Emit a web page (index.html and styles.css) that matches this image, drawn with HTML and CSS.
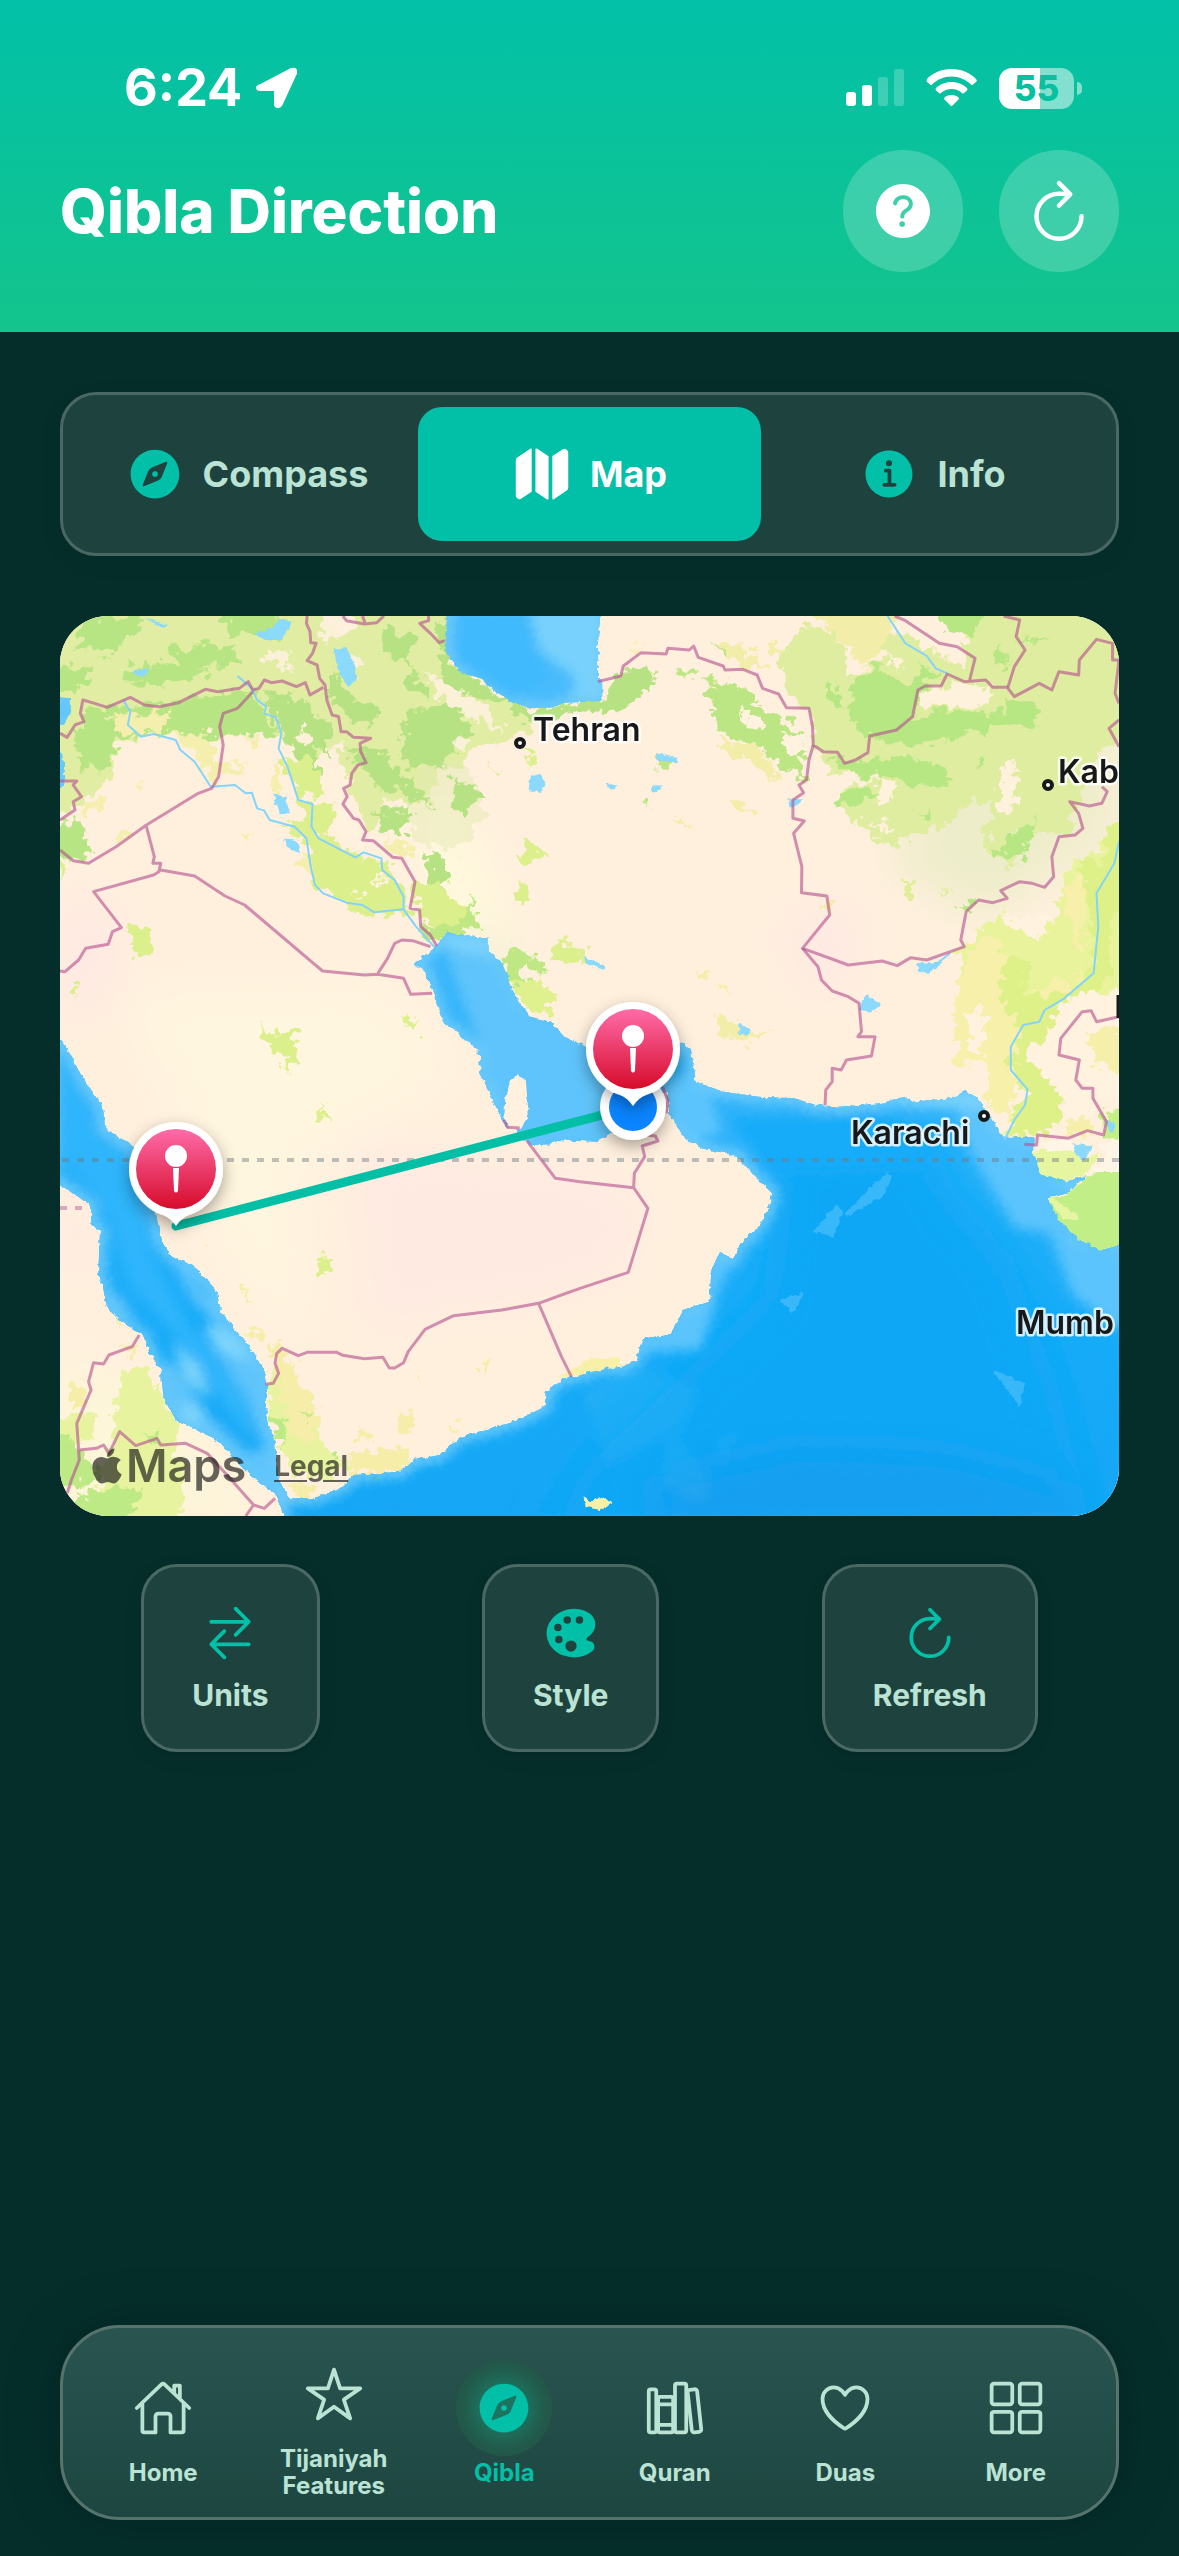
FILE: index.html
```html
<!DOCTYPE html>
<html lang="en">
<head>
<meta charset="utf-8">
<meta name="viewport" content="width=device-width, initial-scale=1">
<title>Qibla Direction</title>
<link rel="stylesheet" href="styles.css">
</head>
<body>
<div class="app">
  <header class="header">
    <div class="status">
      <div class="status-group">
        <span class="time">6:24</span>
        <svg class="location" viewBox="0 0 42 42" aria-hidden="true"><path d="M4.500 17 34 1.500Q42-1.500 41 6.500L26.500 38Q24.500 42 21 41 18 40.500 18 37V24H5Q0 24 0 20.500 0 18.500 4.500 17Z"/></svg>
      </div>
      <div class="status-group status-right">
        <svg class="signal" viewBox="0 0 58 38" aria-hidden="true"><rect y="23" width="10" height="14" rx="3"/><rect x="16" y="16" width="10" height="21" rx="3"/><g opacity=".22"><rect x="32" y="8" width="10" height="29" rx="3"/><rect x="48" width="10" height="37" rx="3"/></g></svg>
        <svg class="wifi" viewBox="0 0 51 38" aria-hidden="true"><path d="M25.500 0C35.500 0 44.500 4 50 10 51 11 51 12 50 13L47 15.500Q46 16.500 45 15.500C40 10.500 33 7.500 25.500 7.500S11 10.500 6 15.500Q5 16.500 4 15.500L1 13Q0 12 1 10C6.500 4 15.500 0 25.500 0Z"/><path d="M25.500 13C32 13 37 15.500 41 19Q42 20 41 21.500L38 24Q37 25 36 24C33 21.500 29.500 20 25.500 20S18 21.500 15 24Q14 25 13 24L10 21.500Q9 20 10 19C14 15.500 19 13 25.500 13Z"/><path d="M25.500 26C29 26 31 27 32.500 28.500 33 29 33 30 32.500 30.500L26.500 36.500Q25.500 37.500 24.500 36.500L18.500 30.500Q17.500 29.500 18.500 28.500C20 27 22 26 25.500 26Z"/></svg>
        <div class="battery"><span>55</span></div>
      </div>
    </div>
    <div class="title-row">
      <h1>Qibla Direction</h1>
      <div class="header-actions">
        <button type="button" class="round" aria-label="Help"><svg class="icon-lg" viewBox="0 0 512 512"><path d="M256 64C150 64 64 150 64 256s86 192 192 192 192-86 192-192S362 64 256 64zm-6 304a20 20 0 1120-20 20 20 0 01-20 20zm33.440-102C267.230 276.880 265 286.850 265 296a14 14 0 01-28 0c0-21.910 10.080-39.330 30.820-53.260C287.100 229.800 298 221.600 298 203.570c0-12.260-7-21.570-21.490-28.460-3.410-1.620-11-3.200-20.340-3.090-11.720.15-20.820 2.950-27.830 8.590C215.120 191.250 214 202.830 214 203a14 14 0 11-28-1.350c.11-2.430 1.800-24.320 24.770-42.800 11.910-9.580 27.060-14.560 45-14.780 12.700-.15 24.630 2 32.720 5.820C312.700 161.340 326 180.430 326 203.570c0 33.830-22.610 49.020-42.560 62.430z"/></svg></button>
        <button type="button" class="round" aria-label="Reload"><svg class="icon-lg line" viewBox="0 0 512 512"><path d="M320 146s24.360-12-64-12a160 160 0 10160 160M256 58l80 80-80 80"/></svg></button>
      </div>
    </div>
  </header>

  <main class="content">
    <div class="tabs" role="tablist">
      <button type="button" role="tab" class="tab" aria-selected="false"><svg class="icon" viewBox="0 0 512 512"><circle cx="256" cy="256" r="24"/><path d="M256 48C141.130 48 48 141.130 48 256s93.130 208 208 208 208-93.130 208-208S370.870 48 256 48zm105.070 113.330l-46.880 117.200a64 64 0 01-35.660 35.660l-117.200 46.880a8 8 0 01-10.400-10.400l46.880-117.200a64 64 0 0135.660-35.660l117.200-46.880a8 8 0 0110.400 10.400z"/></svg>Compass</button>
      <button type="button" role="tab" class="tab active" aria-selected="true"><svg class="icon" viewBox="0 0 512 512"><path d="M48.170 113.340A32 32 0 0032 141.240V438a32 32 0 0047 28.370c.43-.23.85-.47 1.260-.74l84.140-55.050a8 8 0 003.630-6.720V46.450a8 8 0 00-12.510-6.630zM212.360 39.310A8 8 0 00200 46v357.560a8 8 0 003.630 6.720l96 62.420A8 8 0 00312 466V108.670a8 8 0 00-3.640-6.730zM464.530 46.470a31.640 31.640 0 00-31.500-.88 12.070 12.070 0 00-1.250.74l-84.150 55a8 8 0 00-3.630 6.720v357.460a8 8 0 0012.520 6.630l107.070-73.460a32 32 0 0016.410-28v-296a32.760 32.760 0 00-15.470-28.210z"/></svg>Map</button>
      <button type="button" role="tab" class="tab" aria-selected="false"><svg class="icon" viewBox="0 0 512 512"><path d="M256 56C145.720 56 56 145.720 56 256s89.720 200 200 200 200-89.720 200-200S366.280 56 256 56zm0 82a26 26 0 11-26 26 26 26 0 0126-26zm48 226h-88a16 16 0 010-32h28v-88h-16a16 16 0 010-32h32a16 16 0 0116 16v104h28a16 16 0 010 32z"/></svg>Info</button>
    </div>

    <section class="map" aria-label="Map">
      <svg class="layer" viewBox="28 48 2965 2700" preserveAspectRatio="none" aria-hidden="true">
        <defs>
          <filter id="rough" x="-5%" y="-5%" width="110%" height="110%"><feTurbulence type="fractalNoise" baseFrequency=".03" numOctaves="3" seed="4"/><feDisplacementMap in="SourceGraphic" scale="70" xChannelSelector="R" yChannelSelector="G"/></filter>
          <filter id="coast" x="-2%" y="-2%" width="104%" height="104%"><feTurbulence type="fractalNoise" baseFrequency=".06" numOctaves="2" seed="8"/><feDisplacementMap in="SourceGraphic" scale="16" xChannelSelector="R" yChannelSelector="G"/></filter>
          <filter id="soft" x="-30%" y="-30%" width="160%" height="160%"><feGaussianBlur stdDeviation="16"/></filter>
          <filter id="softer" x="-30%" y="-30%" width="160%" height="160%"><feGaussianBlur stdDeviation="60"/></filter>
          <clipPath id="sea-clip"><path id="sea" d="M1075 1045 1020 1090 1050 1115 1070 1170 1085 1220 1100 1265 1145 1300 1160 1320 1200 1350 1205 1420 1240 1500 1265 1560 1282 1585 1315 1575 1310 1600 1345 1635 1400 1633 1420 1620 1530 1625 1568 1600 1600 1590 1650 1600 1680 1550 1690 1500 1725 1470 1730 1480 1734 1540 1774 1610 1824 1645 1924 1668 1974 1730 2022 1780 2014 1820 1984 1880 1929 1935 1914 1978 1874 1958 1852 2010 1846 2105 1774 2130 1734 2205 1664 2215 1639 2280 1604 2300 1534 2305 1484 2325 1440 2335 1388 2375 1385 2420 1310 2460 1240 2485 1150 2510 1090 2565 1020 2580 980 2615 850 2625 820 2660 740 2695 670 2695 640 2640 630 2530 605 2450 608 2350 600 2310 550 2230 480 2140 465 2070 400 1995 340 1970 310 1920 295 1830 235 1640 155 1585 148 1520 90 1430 50 1350 0 1280V1740L60 1775 115 1820V1870L140 1895 135 2020 148 2060 160 2125 200 2165 260 2205 290 2280 310 2310 318 2390 355 2465 410 2490 470 2520 520 2580 575 2640 630 2680 655 2748V2790H3040V1925L2939 1950 2884 1920 2824 1860 2794 1795 2850 1780 2904 1725 2844 1745 2774 1720 2752 1660 2754 1612 2669 1610 2634 1550 2599 1500 2564 1472 2524 1495 2414 1505 2394 1490 2324 1510 2214 1520 2144 1515 2084 1495 1984 1490 1884 1475 1809 1445 1794 1350 1764 1325 1720 1360 1500 1340 1440 1310 1400 1265 1345 1250 1310 1200 1290 1150 1265 1090 1225 1050V1015L1140 1005 1110 995ZM1112 10V48L1108 100 1106 140 1120 175 1145 215 1205 235 1240 270 1290 305 1350 325 1410 322 1440 308 1546 302V240L1534 235V130L1540 60V10ZM0 290 60 295 55 340 40 370 0 375ZM0 420 38 470 40 560 0 570Z"/></clipPath>
          <linearGradient id="ocean" x1="0" y1="0" x2="0" y2="1"><stop offset="0" stop-color="#4ebdfc"/><stop offset=".55" stop-color="#2fb3fa"/><stop offset=".8" stop-color="#16abf8"/><stop offset="1" stop-color="#14a6f5"/></linearGradient>
        </defs>
        <rect x="28" y="48" width="2965" height="2700" fill="#fff0de"/>
        <g filter="url(#softer)">
          <path fill="#ffeae2" d="M850 1650 1480 1700 1660 1800 1620 2010 1350 2110 1100 2130 900 2200Z"/>
          <path fill="#fff6df" d="M200 1180 900 1150 1150 1400 700 1700 700 2200 500 2000 350 1500Z"/>
          <path fill="#f3f0d2" d="M1100 450 1300 1150 1230 1200 1020 650Z"/>
          <path fill="#ffe9e2" d="M28 850 200 950 180 1200 28 1280ZM2050 950 2260 900 2260 1180 2100 1160ZM28 1780 110 1800 130 2000 28 1980Z"/>
          <path fill="#eeedca" d="M2560 300 2993 260V700L2620 960 2350 800Z"/>
          <path fill="#fffadc" d="M1020 600 1120 570 1300 1020 1100 950Z"/>
          <path fill="#fdf6d8" d="M28 2250 400 2480 600 2748 28 2748Z"/>
        </g>
        <g filter="url(#rough)">
          <path fill="#e1eda3" d="M-20-20H740L780 130 850 90 860-20 1112-20 1100 160 1220 260 1300 330 1370 370 1300 420 1190 440 1150 510 1080 500 1060 620 930 600 900 700 830 560 800 430 700 500 640 400 340 400 180 430 180 540-20 680Z"/>
          <path fill="#e6e9b4" d="M1040 480 1180 500 1220 640 1130 760 1020 720 1000 600Z" opacity=".5"/>
          <path fill="#b7e583" d="M90 55 260 50 240 110 160 160 80 140ZM330 150 420 130 520 150 520 195 380 200ZM210 200 380 190 460 215 350 255 220 250ZM480 20 680 60 640 110 500 100ZM100 330 330 310 470 280 560 265 640 400 500 405 340 400 180 420 170 500 80 515 70 400Z"/>
          <path fill="#b7e283" d="M1108 60 1080 90 1100 250 1180 290 1250 300 1350 370 1440 340 1610 330 1700 240 1680 200 1600 210 1546 300 1350 330 1240 275 1120 190ZM790 200 840 300 920 320 900 370 820 350 780 280ZM1000 335 1120 310 1190 390 1150 430 1100 500 980 490 990 420ZM1130 530 1210 580 1160 650 1130 620ZM900 630 1010 620 1000 700 930 700ZM930 90 1020 110 1000 190 940 170ZM820 440 930 460 1000 560 940 580 880 500ZM700 300 790 380 780 470 720 400ZM600 270 720 310 760 520 680 470 640 380ZM1050 760 1120 780 1105 880 1060 860ZM1000 200 1060 260 1060 300 1000 270ZM980 520 1060 600 1070 620 1000 590Z"/>
          <path fill="#b7e583" d="M0 210 110 200 80 290 0 280ZM0 680 80 660 120 760 60 780 0 760Z"/>
          <path fill="#fbf1d8" d="M600 150 670 160 670 200 610 180ZM1050 220 1140 270 1240 340 1270 400 1220 380 1120 320ZM830 150 865 180 860 250 830 220ZM690 420 720 370 720 440ZM1120 420 1180 420 1150 460ZM760 60 800 50 810 110 760 130Z"/>
          <path fill="#f5efae" d="M340 400 600 410 570 500 480 520 460 560 400 450ZM620 500 650 490 640 590 615 560ZM160 350 330 330 320 400 200 400ZM95 600 145 600 110 655 80 640ZM930 710 1020 740 990 780ZM690 780 740 770 730 830ZM170 695 240 700 215 740ZM230 545 270 550 260 560ZM530 700 565 700 550 725ZM1100 910 1150 920 1120 950Z"/>
          <path fill="#fff1dc" d="M440 405 530 410 620 470 600 600 540 500 470 490ZM790 500 830 520 820 600 780 590Z"/>
          <path fill="#dcef8d" d="M680 600 790 610 800 640 760 700 830 740 870 770 930 780 980 850 1010 940 880 950 740 850 720 740 660 670 720 660ZM650 480 740 470 760 580 700 600ZM1020 850 1110 860 1130 900 1190 930 1160 1000 1080 990 1040 950ZM215 980 280 985 285 1060 240 1070ZM585 1260 620 1300 690 1290 690 1390 620 1350 590 1310ZM975 1250 1030 1260 1020 1300ZM28 780 45 790 30 850ZM1330 720 1400 770 1340 800 1315 770ZM1320 840 1345 840 1335 920 1305 915ZM745 1500 785 1560 755 1550ZM755 1965 790 1975 785 2035 760 2010ZM60 1150 82 1165 65 1190ZM645 1390 690 1360 665 1420ZM1410 1020 1500 1050 1490 1080 1415 1080ZM1225 500 1265 510 1250 520ZM1310 440 1360 460 1345 490Z"/>
          <path fill="#fff3df" d="M790 640 830 620 880 740 820 720ZM910 825 940 835 925 850ZM850 880 880 885 870 900Z"/>
          <path fill="#bfe884" d="M1260 1090 1290 1040 1370 1070 1380 1130 1330 1080 1310 1120 1350 1150 1290 1150ZM1040 980 1150 980 1180 890 1200 990 1120 1010 1050 1020Z"/>
          <path fill="#dff08e" d="M1290 1150 1380 1140 1410 1190 1400 1245 1340 1240 1310 1190Z"/>
          <path fill="#f3edaa" d="M2120 0 2380 0 2350 130 2280 200 2220 130ZM1860 120 1930 130 2010 210 1900 190ZM1870 420 1980 430 2050 550 1960 480 1870 450ZM2010 120 2060 140 2040 170ZM1905 600 1990 630 1920 635ZM1745 650 1815 690 1770 680ZM1820 1110 1860 1130 1830 1140ZM1865 1150 1925 1185 1880 1175ZM1870 1250 2010 1300 1950 1330 1870 1300ZM2160 900 2210 900 2190 935ZM1620 130 1670 135 1640 145Z"/>
          <path fill="#dfeda0" d="M2120 70 2200 90 2240 220 2340 180 2330 130 2380 90 2480 160 2560 200 2580-20 3040-20V380L2920 480 2880 600 2850 700 2780 700 2700 690 2700 800 2620 750 2640 600 2560 620 2500 680 2420 700 2360 745 2280 690 2200 620 2220 560 2330 540 2200 520 2140 440 2130 340 2060 280 2040 170Z"/>
          <path fill="#b6e783" d="M2250 230 2320 200 2400 260 2440 200 2480 210 2410 350 2350 390 2280 400 2240 350ZM2300 400 2480 330 2640 340 2700 300 2780 330 2740 380 2600 390 2500 420 2400 440 2330 420ZM2180 470 2300 480 2400 470 2500 500 2520 550 2450 560 2350 530 2240 530ZM2200 600 2270 560 2320 570 2280 600 2200 620ZM2430 640 2470 620 2460 660ZM2490 0 2640 0 2580 110 2500 90ZM2640 770 2700 700 2760 660 2730 730 2740 770ZM2180 230 2220 320 2180 300ZM2590 480 2625 485 2610 520ZM2550 920 2590 890 2580 930ZM2700 110 2800 110 2790 120 2710 118ZM2660 130 2680 180 2640 200Z"/>
          <path fill="#fff2dc" d="M2400 80 2450 90 2500 150 2440 140ZM2440 280 2560 250 2660 270 2600 320 2450 320ZM2340 170 2390 180 2380 210ZM2660 500 2700 490 2710 620 2660 640ZM2330 540 2370 560 2340 610 2310 600ZM2300 660 2380 680 2320 700Z"/>
          <path fill="#bce583" d="M1840 260 1900 270 2020 340 2110 400 2120 540 2060 520 1980 430 1880 400ZM1680 460 1750 480 1730 510 1700 500ZM1810 230 1900 240 1990 300 1950 310ZM1655 600 1675 605 1675 630ZM1850 130 1890 150 1890 170ZM1750 210 1810 215 1790 230Z"/>
          <path fill="#fff3df" d="M1930 330 2000 360 1990 390 1950 370ZM2050 400 2110 410 2115 470 2060 450Z"/>
          <path fill="#e8f39b" d="M2540 1060 2650 940 2760 990 2820 950 2850 800 2900 780 3040 620V1200L2860 1240 2740 1300 2600 1380 2540 1280Z"/>
          <path fill="#f7f0aa" d="M2550 1100 2620 1000 2680 1030 2660 1180 2740 1190 2790 1150 2890 1130 2840 850 2900 830 2900 1000 2850 1200 2740 1290 2700 1470 2690 1560 2630 1530 2620 1380 2540 1400 2530 1250Z"/>
          <path fill="#ddf188" d="M2880 780 2960 800 2950 700 3040 660V900L2970 940V1100L2940 1180 2870 1240 2800 1290 2730 1360 2820 1440 2840 1520 2810 1600 2670 1610 2700 1540 2730 1470 2690 1380 2720 1290 2660 1200 2670 1070 2730 1070 2740 1190 2860 1180 2920 1100 2915 950Z"/>
          <path fill="#fff2de" d="M2740 1380 2840 1200 3040 1150V1500L2960 1490 2900 1560 2840 1590 2850 1500ZM2570 1240 2620 1220 2610 1370 2570 1340ZM2670 950 2780 950 2800 1000 2740 1010Z"/>
          <path fill="#f6efaa" d="M2900 1300 3040 1290V1410L2930 1400ZM2850 1560 2900 1560 2930 1600 2840 1600Z"/>
          <path fill="#c4ef87" d="M2950 1540 3040 1510V1660L2960 1620Z"/>
          <path fill="#dfee97" d="M2395 850 2420 840 2400 890 2380 890ZM2480 865 2520 865 2500 880Z"/>
          <path fill="#e8f3a0" d="M200 2310 270 2300 310 2400 360 2480 350 2530 380 2650 360 2780 100 2780 180 2500ZM0 2450 120 2440 110 2520 0 2530ZM640 2260 690 2350 740 2400 760 2520 840 2600 750 2640 680 2620 650 2540 620 2460 610 2380Z"/>
          <path fill="#f5eda8" d="M50 2360 100 2340 100 2400 60 2430ZM170 2150 200 2170 180 2180ZM620 2230 650 2240 700 2340 750 2440 740 2530 680 2510 640 2360ZM820 2570 980 2540 1010 2570 990 2610 860 2625ZM670 2650 740 2660 730 2690 680 2690ZM545 2180 600 2200 600 2215 560 2205ZM530 2060 550 2065 560 2120ZM1020 2330 1055 2320 1030 2350ZM860 2500 905 2500 900 2520 860 2520ZM970 2440 1020 2450 1000 2510 980 2480ZM1120 2470 1145 2480 1130 2500ZM190 2240 250 2240 230 2280ZM1200 2290 1225 2280 1210 2320ZM430 1940 460 1945 440 1955Z"/>
          <path fill="#bdea85" d="M0 2500 80 2510 90 2560 150 2610 110 2660 0 2650ZM100 2680 250 2660 240 2730 180 2790 60 2790ZM260 2500 310 2490 300 2530ZM620 2440 660 2460 655 2540 625 2500ZM700 2430 740 2440 720 2460ZM790 2560 820 2565 800 2580Z"/>
        </g>
        <g filter="url(#coast)">
          <use href="#sea" fill="url(#ocean)"/>
          <g fill="#8bdafb"><path d="M570 100 620 85 640 60 680 62 650 120 600 120ZM230 215 275 205 260 235ZM265 55 330 75 320 85ZM795 145 830 145 855 200 860 235 835 262 805 210ZM625 580 655 590 675 640 640 640ZM655 715 690 720 700 760 660 740ZM1345 530 1370 522 1390 550 1370 578 1340 570ZM1495 1070 1560 1100 1555 1108 1500 1090ZM1695 460 1755 470 1755 490 1700 480ZM1555 548 1590 558 1570 570ZM1680 558 1718 560 1690 578ZM2067 598 2108 598 2090 620 2070 618ZM2270 1200 2290 1185 2325 1215 2300 1235 2268 1230ZM2430 1090 2480 1085 2500 1090 2460 1118 2430 1115ZM1930 1270 1965 1290 1950 1310 1930 1300ZM2865 1630 2920 1640 2900 1680 2870 1680ZM2950 1560 2985 1570 2975 1600Z"/></g>
          <g clip-path="url(#sea-clip)">
            <path filter="url(#softer)" fill="#08a7f6" d="M2020 1600 2480 1640 2540 1780 2700 1980 2740 2120 2820 2350 2920 2800H1400L1500 2600 1750 2350 2000 2080Z"/>
            <path filter="url(#softer)" fill="#129ff0" d="M1700 2640 2100 2540 2500 2560 2860 2660V2800H1700Z"/>
            <g filter="url(#soft)">
              <use href="#sea" fill="none" stroke="#6dcbfb" stroke-width="36"/>
              <path fill="#5fc4fb" d="M1090 1000 1225 1030 1310 1220 1600 1330 1690 1500 1560 1640 1380 1640 1290 1600 1190 1300ZM600 2200 540 2250 600 2330 610 2560 650 2700 600 2640 480 2500 360 2460 310 2330 340 2280 440 2440 560 2560 600 2540 540 2380 440 2200 460 2140ZM300 1900 450 2100 470 2180 400 2100 340 1980ZM140 2060 200 2170 290 2260 200 2090Z"/>
              <path fill="#2fb5fb" d="M28 1420 90 1470 130 1590 220 1660 260 1820 280 1960 380 2160 520 2340 580 2540 500 2440 380 2240 220 2050 170 1850 110 1750 28 1660Z"/>
              <path fill="#7dd4fb" d="M340 2220 380 2340 450 2400 420 2300ZM430 2180 520 2200 560 2280 470 2260ZM370 2400 430 2430 420 2470 370 2460Z"/>
              <path fill="#5bc4fc" d="M2570 1470 2640 1600 2760 1640 2830 1780 2870 1930 3040 1950V2200L2960 2170 2860 2080 2800 1900 2700 1880 2600 1700 2540 1560ZM1700 1480 1760 1420 1850 1480 1880 1600 1790 1620ZM1830 2000 1930 1950 1870 2070 1850 2160 1820 2250 1780 2250 1640 2260 1680 2200 1850 2100ZM1960 1880 1990 1920 1930 1960Z"/>
              <path fill="#3fbafc" d="M1360 30 1140 30 1130 180 1290 300 1400 240Z"/>
              <path fill="#78d1fc" d="M1340 20 1540 20 1550 300 1460 290 1470 230 1370 150ZM1060 1010 1230 1010 1260 1080 1130 1050ZM2320 1500 2640 1470 2600 1530 2400 1520Z"/>
              <path fill="#19acf9" d="M1900 1550 2120 1560 2300 1540 2500 1600 2480 1700 2020 1720Z"/>
            </g>
            <path fill="#6fcdfc" opacity=".45" d="M2225 1840 2345 1715 2360 1730 2330 1790 2230 1850ZM2135 1895 2200 1815 2220 1830 2195 1910ZM2040 2100 2110 2080 2080 2140ZM2640 2310 2730 2350 2715 2420Z"/>
            <path fill="#fff" opacity=".05" filter="url(#soft)" d="M1484 2370 1640 2290 1820 2370 1780 2480 1560 2600ZM1860 2520 1950 2480 1880 2600ZM1740 2480 1850 2640 1830 2720 1700 2640Z"/>
          </g>
          <path fill="#fff1de" d="M1310 1425 1332 1440 1340 1540 1318 1590 1285 1585 1272 1550 1275 1490 1290 1440Z"/>
          <path fill="#e6f5a0" d="M2752 1660 2790 1640 2860 1650 2890 1680 2940 1660 2900 1720 2844 1745 2774 1720Z"/>
          <path fill="#fff5e6" d="M2775 1630 2850 1615 2870 1650 2790 1655ZM2930 1640 3030 1600V1715L2920 1715 2960 1660Z"/>
          <path fill="#c2ee88" d="M2794 1795 2840 1790 2900 1735 2930 1716H3040V1925L2939 1950 2884 1920 2824 1860Z"/>
          <path fill="#e6f5a0" d="M2794 1795 2810 1795 2870 1840 2880 1860 2840 1860Z"/>
          <path fill="#f8f0a9" d="M1494 2692 1515 2705 1545 2690 1575 2710 1540 2730 1500 2720ZM1420 2335 1510 2275 1590 2275 1600 2298 1484 2322Z"/>
        </g>
        <g class="rivers">
          <path d="M205 300 225 335 218 375 255 410 290 402 352 420 365 450 405 485 450 560 518 555 548 580 565 578 580 625 600 632 615 660 685 680 718 715 730 800 742 855 765 880 830 908 875 915 908 937 990 928"/>
          <path d="M525 228 565 265 580 300 605 320 600 340 632 352 648 400 640 445 665 500 695 600 735 612 732 680 752 715 855 772 878 757 928 775 930 810 965 840 990 890V928L1025 980 1075 1040"/>
          <path d="M2993 725 2980 790 2930 880 2935 980 2922 1120 2840 1195 2785 1230 2770 1265 2725 1275 2690 1340V1410L2737 1468 2730 1515 2700 1560 2672 1620M2345 48 2395 130 2455 168 2480 205 2512 220M2460 1110 2520 1060"/>
        </g>
        <g class="borders">
          <path d="M28 400 48 412 70 375 95 365 85 340 92 300 125 310 160 322 225 292 265 315 305 320 360 308 435 268 470 275 530 265 555 245 568 270 585 265 600 240 620 248 650 243 690 260 715 248 728 285 765 262"/>
          <path d="M720 48 718 70 728 95 730 128 745 130 735 160 720 182 748 195 755 235 770 255 775 300 790 345 808 350 815 395 830 395 850 412 898 415 868 430 870 455 885 488 862 495 845 520 840 555 822 565 832 590 820 612 850 655 865 660 885 695 875 720 905 722 960 772 985 775 1022 845 1008 925 1035 930 1038 980 1065 1005 1083 1038"/>
          <path d="M568 275 525 325 485 340 475 380 485 435 472 530 453 565 415 580 270 675 185 740 108 790 65 782 28 750M270 680 292 770 288 790 310 790 305 815 290 825 122 875 200 983 175 995 163 1033 100 1045 80 1080 42 1115 28 1113M310 810 405 828 490 888 545 915 763 1113 880 1125 918 1123 990 1135 1010 1183 1070 1180M918 1120 945 1075 965 1030 985 1020 1015 1022 1065 1040M28 543 75 543 65 555 88 590 65 605 70 630 28 660"/>
          <path d="M820 48 830 62 880 72 915 68 935 48M875 48 882 70M1060 48V62L1035 70 1065 100 1090 128 1105 122"/>
          <path d="M1534 245 1598 228 1605 198 1655 158 1725 162 1730 145 1790 150 1802 138 1815 172 1885 198 1890 210 1940 208 1980 225 1995 265 2040 282 2062 323 2125 325 2135 380 2137 435 2165 455 2205 457 2225 490 2255 480 2290 458 2295 408 2370 390 2415 350 2430 270 2450 258 2495 258 2512 222 2560 245 2620 240 2640 262 2680 262 2700 290 2770 250 2805 270 2825 215 2880 225 2882 180 2930 118 2975 130V180H2993"/>
          <path d="M2365 48 2395 62 2490 130 2540 140 2590 175 2575 240M2670 48 2715 60 2705 110 2730 150 2700 200 2682 262M2993 180 2982 280 2993 310M2993 360 2965 385 2993 440"/>
          <path d="M2137 435 2125 480 2118 540 2097 555 2110 578 2080 600V655L2112 663 2082 700 2105 800 2104 878 2175 888 2183 945 2107 1045 2235 1095 2330 1083 2372 1097 2410 1073 2455 1080 2560 1040 2550 1020 2565 935 2600 900 2640 908 2680 895 2662 872 2715 845 2750 850 2785 862 2810 830 2805 770 2825 710 2870 705 2892 685 2880 640 2855 605 2910 618 2945 610 2960 575 2945 560"/>
          <path d="M2107 1045 2150 1100 2160 1140 2190 1173 2235 1190 2265 1210 2272 1295 2262 1310 2310 1310 2300 1368 2230 1380 2215 1410 2190 1405V1445L2172 1470 2170 1515M2993 1250 2930 1265 2915 1232 2890 1235 2830 1315 2825 1365 2882 1380 2872 1440 2890 1465H2920V1495L2958 1565 2950 1605 2905 1592 2850 1615 2765 1605 2762 1635 2728 1633"/>
          <path d="M1270 1560 1282 1582 1315 1584M1335 1622 1415 1735 1484 1745 1634 1763 1674 1825 1619 2017 1484 2065 1368 2110 1265 2130 1130 2147 1050 2188 1003 2255 990 2288 965 2304H950L932 2272 880 2276 820 2266 803 2257H720L695 2267 650 2245 635 2260 630 2290 640 2320 625 2350 603 2353M1368 2110 1432 2270 1460 2330M1634 1763 1636 1720 1665 1670 1658 1638 1702 1623 1695 1608 1670 1605M1715 1460 1730 1500 1725 1540"/>
          <path d="M250 2205 230 2240 165 2265 150 2292 122 2288 108 2345 115 2370 75 2470 82 2580 60 2640 48 2680M82 2550 130 2545 150 2535 165 2560 195 2495 240 2537 300 2515 310 2535 380 2530 440 2560 500 2630 570 2715 600 2725 630 2695M570 2715 548 2748"/>
        </g>
      </svg>
      <svg class="layer" viewBox="0 0 1059 900" role="img" aria-label="Route to the Kaaba">
        <defs>
          <linearGradient id="pin-fill" x1="0" y1="0" x2="0" y2="1"><stop offset="0" stop-color="#ff6ca8"/><stop offset="1" stop-color="#d60b2b"/></linearGradient>
          <filter id="shadow" x="-50%" y="-50%" width="200%" height="200%"><feDropShadow dx="0" dy="6" stdDeviation="8" flood-opacity=".35"/></filter>
          <g id="pin">
            <path filter="url(#shadow)" fill="#fff" d="M-47 0A47 47 0 1 1 47 0C47 22 32 40 13 46Q5 49 0 57-5 49-13 46C-32 40-47 22-47 0Z"/>
            <circle r="40" fill="url(#pin-fill)"/>
            <circle cy="-13" r="11" fill="#fff"/>
            <path fill="#fff" d="M-3-1 3-1 2 22Q0 25-2 22Z"/>
          </g>
        </defs>
        <path class="tropic" d="M2 544H1059"/>
        <path class="tropic pink" d="M0 592H30"/>
        <g class="city">
          <text x="473" y="125">Tehran</text><circle cx="460" cy="127" r="4"/>
          <text x="998" y="167">Kab</text><circle cx="988" cy="169" r="4"/>
          <text x="791" y="528">Karachi</text><circle cx="924" cy="500" r="4"/>
          <text x="956" y="718">Mumb</text>
          <path d="M1058 379V402"/>
        </g>
        <path class="route" d="M116 610 573 491"/>
        <g filter="url(#shadow)"><circle cx="573" cy="491" r="33" fill="#fff"/></g>
        <circle cx="573" cy="491" r="24" fill="#0a84ff"/>
        <use href="#pin" x="116" y="553"/>
        <use href="#pin" x="573" y="433"/>
      </svg>
      <div class="attribution">
        <span class="maps-logo"><svg viewBox="0 0 384 512" aria-hidden="true"><path d="M318.700 268.700c-.2-36.700 16.400-64.400 50-84.800-18.800-26.900-47.200-41.700-84.700-44.600-35.500-2.800-74.300 20.700-88.500 20.700-15 0-49.400-19.700-76.400-19.700C63.300 141.200 4 184.800 4 273.500q0 39.300 14.400 81.200c12.800 36.700 59 126.700 107.200 125.200 25.200-.6 43-17.900 75.800-17.900 31.800 0 48.300 17.900 76.400 17.900 48.600-.7 90.400-82.500 102.600-119.300-65.200-30.700-61.700-90-61.700-91.900zm-56.600-164.200c27.300-32.400 24.800-61.900 24-72.500-24.100 1.400-52 16.400-67.900 34.900-17.500 19.800-27.800 44.300-25.600 71.900 26.100 2 49.900-11.400 69.500-34.300z"/></svg>Maps</span>
        <a href="#legal">Legal</a>
      </div>
    </section>

    <div class="actions">
      <button type="button" class="action"><svg class="icon line" viewBox="0 0 512 512"><path d="M304 48l112 112-112 112M398.870 160H96M208 464L96 352l112-112M114 352h302"/></svg>Units</button>
      <button type="button" class="action"><svg class="icon" viewBox="0 0 512 512"><path d="M441 336.200l-.06-.05c-9.930-9.180-22.780-11.340-32.160-12.920l-.69-.12c-9.050-1.490-10.480-2.500-14.580-6.170-2.440-2.170-5.350-5.650-5.350-9.940s2.910-7.770 5.340-9.940l30.280-26.870c25.920-22.910 40.200-53.660 40.200-86.590s-14.250-63.680-40.200-86.600c-35.890-31.590-85-49-138.370-49C223.720 48 162 71.370 116 112.110c-43.870 38.770-68 90.710-68 146.240s24.160 107.470 68 146.230c21.750 19.240 47.490 34.180 76.520 44.420a266.170 266.170 0 0086.870 15h1.810c61 0 119.090-20.570 159.390-56.400 9.700-8.560 15.150-20.830 15.340-34.560.21-14.170-5.370-27.950-14.930-36.840zM112 208a32 32 0 1132 32 32 32 0 01-32-32zm40 135a32 32 0 1132-32 32 32 0 01-32 32zm40-199a32 32 0 1132 32 32 32 0 01-32-32zm64 271a48 48 0 1148-48 48 48 0 01-48 48zm72-239a32 32 0 1132-32 32 32 0 01-32 32z"/></svg>Style</button>
      <button type="button" class="action"><svg class="icon line" viewBox="0 0 512 512"><path d="M320 146s24.360-12-64-12a160 160 0 10160 160M256 58l80 80-80 80"/></svg>Refresh</button>
    </div>
  </main>

  <nav class="nav" aria-label="Main">
    <a class="nav-item" href="#home"><span class="nav-icon"><svg class="icon line" viewBox="0 0 512 512"><path d="M80 212v236a16 16 0 0016 16h96V328a24 24 0 0124-24h80a24 24 0 0124 24v136h96a16 16 0 0016-16V212M480 256L266.890 52c-5-5.280-16.690-5.340-21.780 0L32 256M400 179V64h-48v69"/></svg></span>Home</a>
    <a class="nav-item" href="#features"><span class="nav-icon"><svg class="icon line" viewBox="0 0 512 512"><path d="M480 208H308L256 48l-52 160H32l140 96-54 160 138-100 138 100-54-160z"/></svg></span>Tijaniyah Features</a>
    <a class="nav-item current" href="#qibla" aria-current="page"><span class="nav-icon"><svg class="icon" viewBox="0 0 512 512"><circle cx="256" cy="256" r="24"/><path d="M256 48C141.130 48 48 141.130 48 256s93.130 208 208 208 208-93.130 208-208S370.870 48 256 48zm105.070 113.330l-46.880 117.200a64 64 0 01-35.660 35.660l-117.200 46.880a8 8 0 01-10.400-10.400l46.880-117.200a64 64 0 0135.660-35.660l117.200-46.880a8 8 0 0110.400 10.400z"/></svg></span>Qibla</a>
    <a class="nav-item" href="#quran"><span class="nav-icon"><svg class="icon line" viewBox="0 0 512 512"><rect x="32" y="96" width="64" height="368" rx="16"/><path d="M112 224h128M112 400h128"/><rect x="112" y="160" width="128" height="304" rx="16"/><rect x="256" y="48" width="96" height="416" rx="16"/><path d="M422.460 96.110l-40.400 4.250c-11.120 1.170-19.180 11.570-17.930 23.100l34.920 321.590c1.260 11.530 11.370 20 22.490 18.840l40.400-4.250c11.120-1.170 19.180-11.570 17.930-23.100L445 115c-1.310-11.580-11.420-20.060-22.540-18.890z"/></svg></span>Quran</a>
    <a class="nav-item" href="#duas"><span class="nav-icon"><svg class="icon line" viewBox="0 0 512 512"><path d="M352.920 80C288 80 256 144 256 144s-32-64-96.920-64c-52.760 0-94.540 44.140-95.080 96.810-1.100 109.330 86.730 187.080 183 252.420a16 16 0 0018 0c96.260-65.340 184.090-143.090 183-252.420-.54-52.670-42.320-96.810-95.080-96.810z"/></svg></span>Duas</a>
    <a class="nav-item" href="#more"><span class="nav-icon"><svg class="icon line" viewBox="0 0 512 512"><rect x="48" y="48" width="176" height="176" rx="20"/><rect x="288" y="48" width="176" height="176" rx="20"/><rect x="48" y="288" width="176" height="176" rx="20"/><rect x="288" y="288" width="176" height="176" rx="20"/></svg></span>More</a>
  </nav>
</div>
</body>
</html>
```
FILE: styles.css
```css
* { box-sizing: border-box; }

body {
  margin: 0;
  background: #052e2b;
  color: #bbe3d4;
  font-family: Inter, "Liberation Sans", sans-serif;
}

button {
  margin: 0;
  padding: 0;
  border: 0;
  background: none;
  color: inherit;
  font: inherit;
}

svg { display: block; flex: none; fill: currentColor; }

.app {
  display: flex;
  flex-direction: column;
  min-height: 100vh;
}

.icon { width: 60px; height: 60px; }
.icon-lg { width: 72px; height: 72px; }

.line {
  fill: none;
  stroke: currentColor;
  stroke-width: 32px;
  stroke-linecap: round;
  stroke-linejoin: round;
}

/* Header */
.header {
  padding: 0 60px 60px;
  background: linear-gradient(#02c1a8, #13c48c);
  color: #fff;
}

.status {
  display: flex;
  justify-content: space-between;
  align-items: flex-end;
  height: 110px;
  padding: 0 45px 0 64px;
}

.status-group { display: flex; align-items: center; gap: 14px; height: 44px; }
.status-right { gap: 22px; }

.time { font-size: 52px; font-weight: 700; line-height: 44px; }
.location { width: 42px; height: 42px; }
.signal { width: 58px; height: 38px; }
.wifi { width: 51px; height: 38px; }

.battery {
  position: relative;
  display: flex;
  align-items: center;
  justify-content: center;
  width: 75px;
  height: 41px;
  border-radius: 13px;
  background: linear-gradient(90deg, #fff 55%, #83e0cf 55%);
  color: #06c0a0;
  font-size: 35px;
  font-weight: 800;
}

.battery::after {
  content: "";
  position: absolute;
  left: 78px;
  top: 14px;
  width: 5px;
  height: 13px;
  border-radius: 0 5px 5px 0;
  background: #83e0cf;
}

.title-row {
  display: flex;
  align-items: center;
  justify-content: space-between;
  padding-top: 40px;
}

h1 { margin: 0; font-size: 60px; font-weight: 800; line-height: 72px; }

.header-actions { display: flex; gap: 36px; }

.round {
  display: flex;
  align-items: center;
  justify-content: center;
  width: 120px;
  height: 122px;
  border-radius: 60px;
  background: rgba(255, 255, 255, .2);
}

/* Content */
.content { padding: 60px 60px 0; }

.tabs {
  display: flex;
  padding: 12px;
  border: 3px solid #4a6864;
  border-radius: 36px;
  background: #1e433f;
  box-shadow: 0 6px 24px rgba(0, 0, 0, .06);
}

.tab {
  display: flex;
  flex: 1 1 0;
  align-items: center;
  justify-content: center;
  gap: 18px;
  height: 134px;
  border-radius: 24px;
  font-size: 36px;
  font-weight: 700;
}

.tab .icon, .action .icon { color: #02bfa7; }
.tab.active { background: #02bfa7; color: #fff; }
.tab.active .icon { color: #fff; }

.map {
  position: relative;
  aspect-ratio: 1059 / 900;
  margin-top: 60px;
  overflow: hidden;
  border-radius: 48px;
  background: #fff0de;
}

.layer { position: absolute; inset: 0; width: 100%; height: 100%; }

.rivers, .borders { fill: none; stroke-linejoin: round; }
.rivers path { stroke: #86d3fa; stroke-width: 2px; vector-effect: non-scaling-stroke; }
.borders path { stroke: #b4508f; stroke-opacity: .62; stroke-width: 3px; vector-effect: non-scaling-stroke; }

.tropic {
  fill: none;
  stroke: #6e7a85;
  stroke-opacity: .45;
  stroke-width: 4px;
  stroke-dasharray: 7 8;
}

.pink { stroke: #b4508f; }
.route { stroke: #02bfa5; stroke-width: 9px; stroke-linecap: round; }

.city text {
  fill: #17181a;
  stroke: rgba(255, 255, 255, .8);
  stroke-width: 5px;
  stroke-linejoin: round;
  paint-order: stroke;
  font-size: 32px;
  font-weight: 600;
}

.city circle { fill: #fff; stroke: #17181a; stroke-width: 4px; }
.city path { stroke: #17181a; stroke-width: 3px; }

.attribution {
  position: absolute;
  left: 32px;
  bottom: 22px;
  display: flex;
  align-items: center;
  gap: 28px;
  color: rgba(20, 20, 20, .65);
}

.maps-logo {
  display: flex;
  align-items: center;
  gap: 4px;
  font-size: 45px;
  font-weight: 600;
  line-height: 56px;
}

.maps-logo svg { width: 30px; height: 40px; }

.attribution a {
  color: inherit;
  font-size: 28px;
  font-weight: 700;
  text-underline-offset: 4px;
}

.actions {
  display: flex;
  justify-content: space-around;
  margin-top: 48px;
}

.action {
  display: flex;
  flex-direction: column;
  align-items: center;
  gap: 14px;
  padding: 36px 48px;
  border: 3px solid #4a6864;
  border-radius: 36px;
  background: #1e433f;
  box-shadow: 0 6px 18px rgba(0, 0, 0, .1);
  font-size: 30px;
  font-weight: 700;
  line-height: 36px;
}

/* Bottom navigation */
.nav {
  display: grid;
  grid-template-columns: repeat(6, 1fr);
  align-items: center;
  min-height: 195px;
  margin: auto 60px 36px;
  padding: 18px 15px;
  border: 3px solid #56736e;
  border-radius: 60px;
  background: linear-gradient(#29544f, #1d4641);
  box-shadow: 0 0 60px rgba(0, 0, 0, .2);
}

.nav-item {
  display: flex;
  flex-direction: column;
  align-items: center;
  gap: 3px;
  color: inherit;
  font-size: 24px;
  font-weight: 700;
  line-height: 27px;
  text-align: center;
  text-decoration: none;
}

.nav-icon {
  display: flex;
  align-items: center;
  justify-content: center;
  width: 96px;
  height: 96px;
  border-radius: 50%;
}

.current { color: #02bfa7; }
.current .nav-icon { background: radial-gradient(circle, #1c7360 30%, #22594a 62%, #265542 100%); }
```
